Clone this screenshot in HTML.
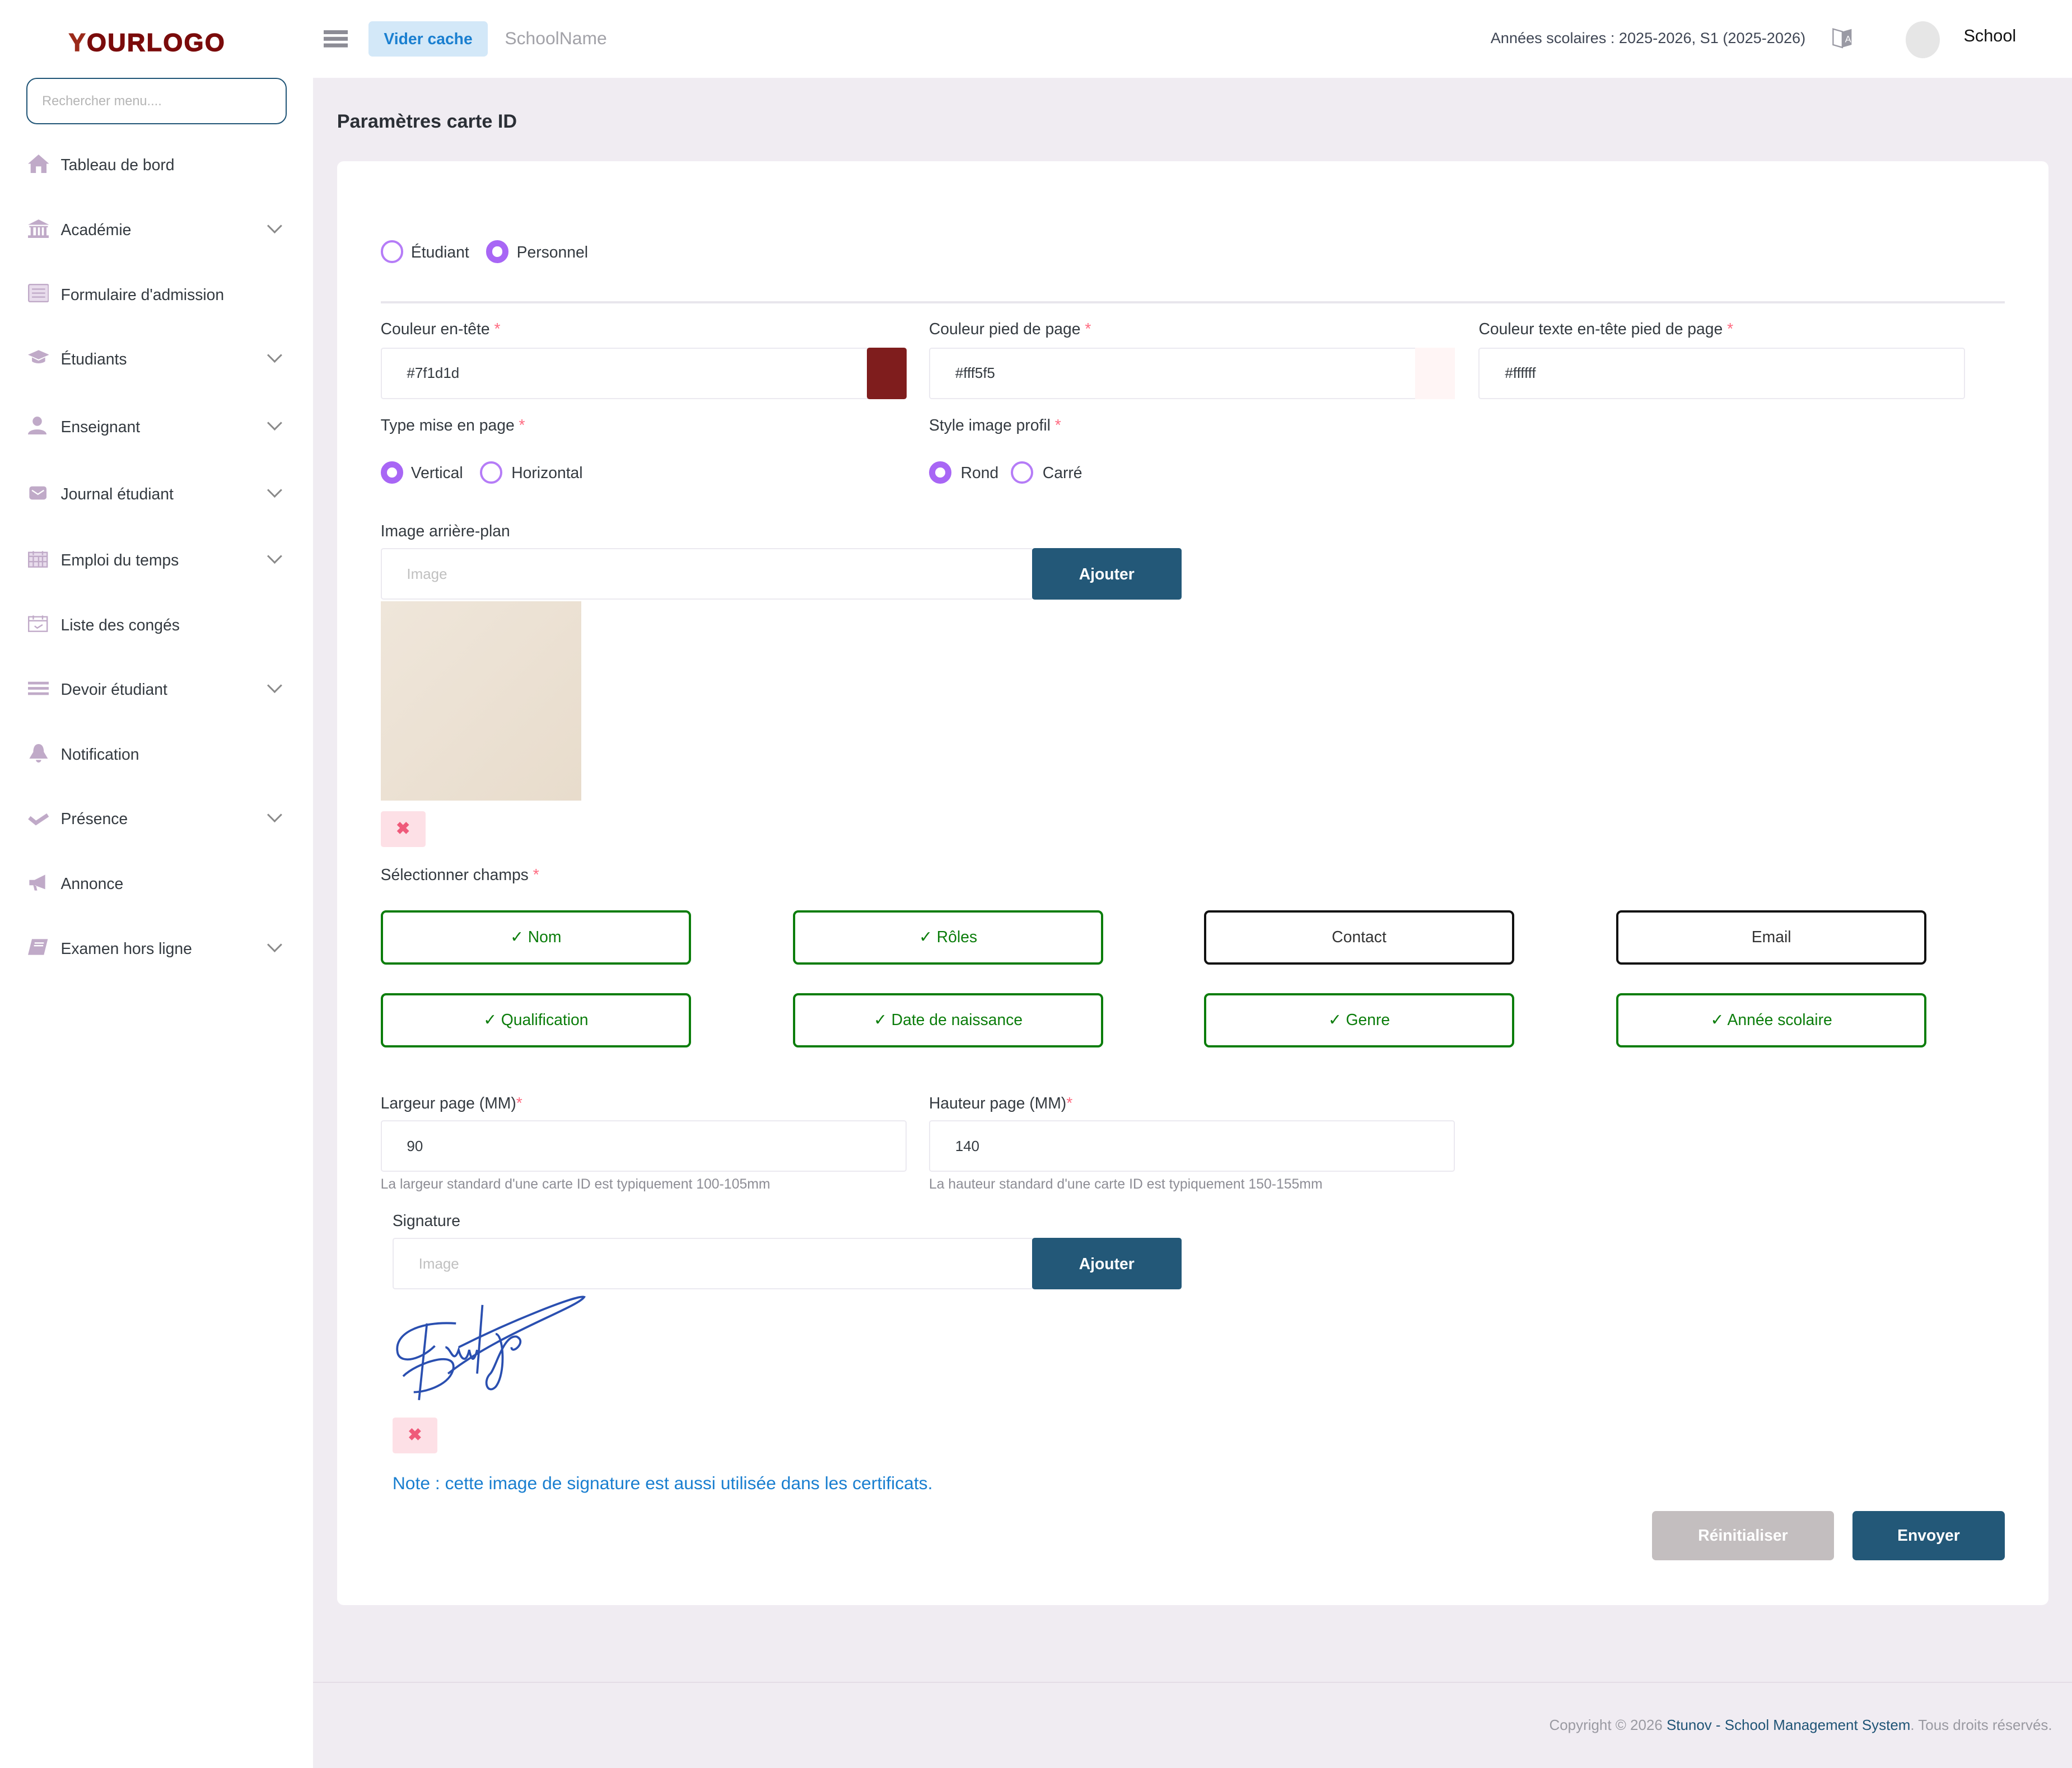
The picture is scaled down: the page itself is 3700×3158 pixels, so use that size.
<!DOCTYPE html>
<html><head><meta charset="utf-8">
<style>
*{box-sizing:border-box;margin:0;padding:0}
html,body{width:3700px;height:3158px;overflow:hidden;background:#f0ecf2}
#w{zoom:2.35969;width:1568px;height:1339px;position:relative;font-family:"Liberation Sans",sans-serif;color:#343a40;font-size:12px}
.a{position:absolute}
.side{left:0;top:0;width:237px;height:1339px;background:#fff}
.top{left:237px;top:0;width:1331px;height:59px;background:#fff}
.mi{position:absolute;left:0;width:237px;height:20px;font-size:12px;color:#343a40}
.mi .ic{position:absolute;left:21px;top:2px;width:16px;height:14px}
.mi .t{position:absolute;left:46px;top:3px}
.mi .ch{position:absolute;left:204px;top:3px;width:8px;height:8px;border-right:1.5px solid #8a8a8a;border-bottom:1.5px solid #8a8a8a;transform:rotate(45deg)}
.lbl{font-size:12px;color:#343a40}
.req{color:#ff6b81}
.inp{background:#fff;border:1px solid #ebe9f0;border-radius:2px;height:39px;font-size:11px;color:#343a40;padding:13px 0 0 19px}
.rad{width:17px;height:17px;border-radius:50%;border:2px solid #b57cf7}
.rad.on{border:5px solid #a866f5;background:#fff}
.btn{background:#235878;color:#fff;font-weight:bold;font-size:12px;text-align:center;border-radius:2px}
.chk{height:41px;width:235px;border:2px solid #0b7d0b;border-radius:4px;color:#0b7d0b;font-size:12px;text-align:center;line-height:37px}
.chk.off{border-color:#111;color:#333}
.xb{width:34px;height:27px;background:#fde0e6;border-radius:2px;color:#ef5a7a;font-weight:bold;text-align:center;line-height:27px;font-size:13px}
.hint{font-size:10.5px;color:#8d8d95}
</style></head><body><div id="w">
<div class="a side"></div>
<div class="a top"></div>
<div class="a" style="left:52px;top:21px;font-size:19px;font-weight:900;color:#7a0b0b;letter-spacing:1px;font-family:'Liberation Sans',sans-serif;-webkit-text-stroke:0.6px #7a0b0b">
<span style="color:#9b2a1a;-webkit-text-stroke:0.6px #9b2a1a">Y</span>OURLOGO</div>
<div class="a" style="left:20px;top:59px;width:197px;height:35px;border:1px solid #1f5476;border-radius:8px;font-size:10px;color:#b5b5b5;padding:11px 0 0 11px">Rechercher menu....</div>

<div class="mi" style="top:115px"><svg class="ic" viewBox="0 0 16 14"><path d="M8 0L0 7h2v7h4V9h4v5h4V7h2z" fill="#c0aac8"/></svg><span class="t">Tableau de bord</span></div>
<div class="mi" style="top:164px"><svg class="ic" viewBox="0 0 16 14"><path d="M8 0L0 4h16zM1 5h14v1H1zM2 6h2v6H2zM6 6h1.5v6H6zM9 6h1.5v6H9zM12 6h2v6h-2zM0 12h16v2H0z" fill="#c0aac8"/></svg><span class="t">Académie</span><span class="ch"></span></div>
<div class="mi" style="top:213px"><svg class="ic" viewBox="0 0 16 14"><rect x="0.5" y="0.5" width="15" height="13" rx="1" fill="#e8dcec" stroke="#c0aac8"/><path d="M3 4h10M3 7h10M3 10h10" stroke="#c0aac8"/></svg><span class="t">Formulaire d'admission</span></div>
<div class="mi" style="top:262px"><svg class="ic" viewBox="0 0 16 14"><path d="M8 1L0 4.5 8 8l8-3.5zM3 6.5v3c2 2 8 2 10 0v-3L8 9z" fill="#c0aac8"/></svg><span class="t">Étudiants</span><span class="ch"></span></div>
<div class="mi" style="top:313px"><svg class="ic" viewBox="0 0 16 14"><circle cx="7" cy="4" r="3.5" fill="#c0aac8"/><path d="M0 14c0-5 14-5 14 0z" fill="#c0aac8"/></svg><span class="t">Enseignant</span><span class="ch"></span></div>
<div class="mi" style="top:364px"><svg class="ic" viewBox="0 0 16 14"><rect x="1" y="2" width="13" height="10" rx="2" fill="#c0aac8"/><path d="M3 5l4.5 3L12 5" stroke="#fff" fill="none"/></svg><span class="t">Journal étudiant</span><span class="ch"></span></div>
<div class="mi" style="top:414px"><svg class="ic" viewBox="0 0 16 14"><rect x="0.5" y="2" width="14" height="11" fill="#e8dcec" stroke="#c0aac8"/><path d="M0.5 5h14M4 1v3M11 1v3M4 5v8M8 5v8M11 5v8M0.5 9h14" stroke="#c0aac8"/></svg><span class="t">Emploi du temps</span><span class="ch"></span></div>
<div class="mi" style="top:463px"><svg class="ic" viewBox="0 0 16 14"><rect x="0.5" y="2" width="14" height="11" fill="none" stroke="#c0aac8"/><path d="M0.5 5h14M4 1v3M11 1v3M5 9l2 1.5L11 8" stroke="#c0aac8" fill="none"/></svg><span class="t">Liste des congés</span></div>
<div class="mi" style="top:512px"><svg class="ic" viewBox="0 0 16 14"><path d="M0 2h16v2H0zM0 6h16v2H0zM0 10h16v2H0z" fill="#c0aac8"/></svg><span class="t">Devoir étudiant</span><span class="ch"></span></div>
<div class="mi" style="top:561px"><svg class="ic" viewBox="0 0 16 14"><path d="M8 0c-3 0-4 3-4 6L1 11h14l-3-5c0-3-1-6-4-6zM6 12a2 2 0 004 0z" fill="#c0aac8"/></svg><span class="t">Notification</span></div>
<div class="mi" style="top:610px"><svg class="ic" viewBox="0 0 16 14"><path d="M1 7l5 4 9-6" stroke="#c0aac8" stroke-width="3" fill="none"/></svg><span class="t">Présence</span><span class="ch"></span></div>
<div class="mi" style="top:659px"><svg class="ic" viewBox="0 0 16 14"><path d="M1 5h4l8-4v11L5 9H1zM4 9l1 4h2l-1-4z" fill="#c0aac8"/></svg><span class="t">Annonce</span></div>
<div class="mi" style="top:708px"><svg class="ic" viewBox="0 0 16 14"><path d="M3 1h12l-3 12H0z" fill="#c0aac8"/><path d="M5 4h7M4.5 6h7" stroke="#fff"/></svg><span class="t">Examen hors ligne</span><span class="ch"></span></div>

<div class="a" style="left:245px;top:23px;width:18px;height:3px;background:#8c8c95;box-shadow:0 5px 0 #8c8c95,0 10px 0 #8c8c95"></div>
<div class="a" style="left:279px;top:16px;width:90px;height:27px;background:#d3e8f8;border-radius:3px;color:#1a7fd0;font-weight:bold;font-size:12px;text-align:center;line-height:27px">Vider cache</div>
<div class="a" style="left:382px;top:21px;font-size:13.5px;color:#a2a2a8">SchoolName</div>
<div class="a" style="left:1128px;top:22px;font-size:11.5px;color:#3f4654">Années scolaires : 2025-2026, S1 (2025-2026)</div>
<svg class="a" style="left:1386px;top:20px" width="17" height="18" viewBox="0 0 17 18"><path d="M1 2l7 2v12l-7-2z" fill="#fff" stroke="#9a9aa4"/><path d="M8 4l7-2v12l-7 2z" fill="#9a9aa4"/><text x="10" y="12" font-size="7" fill="#fff" font-family="Liberation Sans">A</text></svg>
<div class="a" style="left:1442px;top:16px;width:26px;height:28px;border-radius:50%;background:#e6e6e6"></div>
<div class="a" style="left:1486px;top:20px;font-size:13px;color:#111">School</div>

<div class="a" style="left:255px;top:84px;font-size:14.5px;font-weight:bold;color:#2b2f36">Paramètres carte ID</div>
<div class="a" style="left:255px;top:122px;width:1295px;height:1093px;background:#fff;border-radius:5px"></div>

<div class="a rad" style="left:288px;top:182px"></div><div class="a" style="left:311px;top:184px;font-size:12px">Étudiant</div>
<div class="a rad on" style="left:368px;top:182px"></div><div class="a" style="left:391px;top:184px;font-size:12px">Personnel</div>
<div class="a" style="left:288px;top:228px;width:1229px;height:1.5px;background:#e8e6ec"></div>

<div class="a lbl" style="left:288px;top:242px">Couleur en-tête <span class="req">*</span></div>
<div class="a lbl" style="left:703px;top:242px">Couleur pied de page <span class="req">*</span></div>
<div class="a lbl" style="left:1119px;top:242px">Couleur texte en-tête pied de page <span class="req">*</span></div>
<div class="a inp" style="left:288px;top:263px;width:398px">#7f1d1d</div>
<div class="a" style="left:656px;top:263px;width:30px;height:39px;background:#7f1d1d;border-radius:2px"></div>
<div class="a inp" style="left:703px;top:263px;width:398px">#fff5f5</div>
<div class="a" style="left:1071px;top:263px;width:30px;height:39px;background:#fff5f5"></div>
<div class="a inp" style="left:1119px;top:263px;width:368px">#ffffff</div>

<div class="a lbl" style="left:288px;top:315px">Type mise en page <span class="req">*</span></div>
<div class="a lbl" style="left:703px;top:315px">Style image profil <span class="req">*</span></div>
<div class="a rad on" style="left:288px;top:349px"></div><div class="a" style="left:311px;top:351px">Vertical</div>
<div class="a rad" style="left:363px;top:349px"></div><div class="a" style="left:387px;top:351px">Horizontal</div>
<div class="a rad on" style="left:703px;top:349px"></div><div class="a" style="left:727px;top:351px">Rond</div>
<div class="a rad" style="left:765px;top:349px"></div><div class="a" style="left:789px;top:351px">Carré</div>

<div class="a lbl" style="left:288px;top:395px">Image arrière-plan</div>
<div class="a inp" style="left:288px;top:415px;width:494px;color:#c0c0c0">Image</div>
<div class="a btn" style="left:781px;top:415px;width:113px;height:39px;line-height:39px">Ajouter</div>
<div class="a" style="left:288px;top:455px;width:152px;height:151px;background:linear-gradient(135deg,#efe6da,#e8dccc)"></div>
<div class="a xb" style="left:288px;top:614px">✖</div>

<div class="a lbl" style="left:288px;top:655px">Sélectionner champs <span class="req">*</span></div>
<div class="a chk" style="left:288px;top:689px">✓ Nom</div>
<div class="a chk" style="left:600px;top:689px">✓ Rôles</div>
<div class="a chk off" style="left:911px;top:689px">Contact</div>
<div class="a chk off" style="left:1223px;top:689px">Email</div>
<div class="a chk" style="left:288px;top:752px">✓ Qualification</div>
<div class="a chk" style="left:600px;top:752px">✓ Date de naissance</div>
<div class="a chk" style="left:911px;top:752px">✓ Genre</div>
<div class="a chk" style="left:1223px;top:752px">✓ Année scolaire</div>

<div class="a lbl" style="left:288px;top:828px">Largeur page (MM)<span class="req">*</span></div>
<div class="a lbl" style="left:703px;top:828px">Hauteur page (MM)<span class="req">*</span></div>
<div class="a inp" style="left:288px;top:848px;width:398px">90</div>
<div class="a inp" style="left:703px;top:848px;width:398px">140</div>
<div class="a hint" style="left:288px;top:891px">La largeur standard d'une carte ID est typiquement 100-105mm</div>
<div class="a hint" style="left:703px;top:891px">La hauteur standard d'une carte ID est typiquement 150-155mm</div>

<div class="a lbl" style="left:297px;top:917px">Signature</div>
<div class="a inp" style="left:297px;top:937px;width:485px;color:#c0c0c0">Image</div>
<div class="a btn" style="left:781px;top:937px;width:113px;height:39px;line-height:39px">Ajouter</div>
<svg class="a" style="left:297px;top:980px" width="150" height="84" viewBox="0 0 150 84" fill="none" stroke="#2a4fb0" stroke-width="1.6">
<path d="M48 22C20 20 0 30 4 45c3 8 18 4 28-6"/>
<path d="M26 22L20 80"/>
<path d="M8 62c10-10 40-20 38-6-2 12-20 18-30 18"/>
<path d="M40 40c4 0 6 14 10 2 2 8 6 10 8 0 2 10 4 8 6 0"/>
<path d="M68 8L64 60"/>
<path d="M42 60C80 30 140 10 145 2 140 0 90 20 50 40"/>
<path d="M78 30c6 0 8 30 0 40-6 6-10-4-4-10 4-4 10-30 20-28 8 4-4 14-4 8"/>
</svg>
<div class="a xb" style="left:297px;top:1073px">✖</div>
<div class="a" style="left:297px;top:1115px;font-size:13.5px;color:#1a7fd0">Note : cette image de signature est aussi utilisée dans les certificats.</div>

<div class="a" style="left:1250px;top:1144px;width:138px;height:37px;background:#c3bebf;color:#fff;font-weight:bold;text-align:center;line-height:37px;border-radius:3px">Réinitialiser</div>
<div class="a btn" style="left:1402px;top:1144px;width:115px;height:37px;line-height:37px;border-radius:3px">Envoyer</div>

<div class="a" style="left:237px;top:1273px;width:1331px;height:1px;background:#e4dce6"></div>
<div class="a" style="right:15px;top:1300px;font-size:11px;color:#9a9aa2">Copyright © 2026 <span style="color:#1f5476">Stunov - School Management System</span>. Tous droits réservés.</div>
</div></body></html>
